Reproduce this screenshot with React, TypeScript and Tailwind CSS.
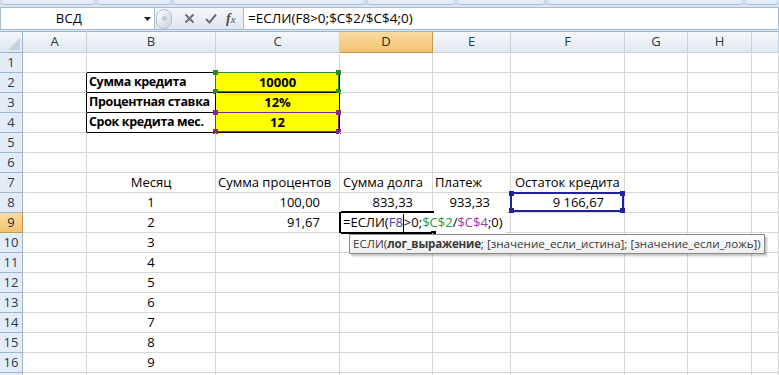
import React from "react";

const font = { fontFamily: "'Open Sans', 'Liberation Sans', sans-serif" };

const cols = ["A", "B", "C", "D", "E", "F", "G", "H", ""];
const gridCols = "grid grid-cols-[23px_64px_129px_124px_93px_78px_114px_63px_64px_1fr]";

type CellDef = { t?: React.ReactNode; cls?: string; extra?: React.ReactNode };

function Handles({ color }: { color: string }) {
  return (
    <>
      <span className={`absolute -left-[3px] -top-[3px] w-[5px] h-[5px] ${color}`} />
      <span className={`absolute -right-[3px] -top-[3px] w-[5px] h-[5px] ${color}`} />
      <span className={`absolute -left-[3px] -bottom-[3px] w-[5px] h-[5px] ${color}`} />
      <span className={`absolute -right-[3px] -bottom-[3px] w-[5px] h-[5px] ${color}`} />
    </>
  );
}

const months = ["1", "2", "3", "4", "5", "6", "7", "8", "9"];

function buildRow(r: number): CellDef[] {
  const cells: CellDef[] = Array.from({ length: 9 }, () => ({}));
  // table B2:C4
  if (r >= 2 && r <= 4) {
    cells[0].cls = "border-r-black";
    const labels = ["Сумма кредита", "Процентная ставка", "Срок кредита мес."];
    const vals = ["10000", "12%", "12"];
    cells[1] = {
      t: labels[r - 2],
      cls: "border-r-black border-b-black font-bold pl-[2px] text-[12.5px] tracking-[-0.35px]",
    };
    cells[2] = { t: vals[r - 2], cls: "border-r-black border-b-black font-bold justify-center bg-[#ffff00]" };
  }
  if (r === 1) {
    cells[1].cls = "border-b-black";
    cells[2].cls = "border-b-black";
  }
  if (r === 2) {
    cells[2].extra = (
      <span className="absolute -left-px -top-px right-0 bottom-0 border border-[#2a8a2a]">
        <Handles color="bg-[#2a8a2a]" />
      </span>
    );
  }
  if (r === 4) {
    cells[2].extra = (
      <span className="absolute -left-px -top-px right-0 bottom-0 border border-[#7e2a8e]">
        <Handles color="bg-[#7e2a8e]" />
      </span>
    );
  }
  if (r === 7) {
    cells[1] = { t: "Месяц", cls: "justify-center" };
    cells[2] = { t: "Сумма процентов", cls: "pl-[2px]" };
    cells[3] = { t: "Сумма долга", cls: "pl-[3px] whitespace-nowrap" };
    cells[4] = { t: "Платеж", cls: "pl-[2px]" };
    cells[5] = { t: "Остаток кредита", cls: "pl-[4px]" };
  }
  if (r >= 8 && r <= 16) {
    cells[1] = { t: months[r - 8], cls: "justify-center" };
  }
  if (r === 8) {
    cells[2] = { t: "100,00", cls: "justify-end pr-[19px]" };
    cells[3] = { t: "833,33", cls: "justify-end pr-[19px]" };
    cells[4] = { t: "933,33", cls: "justify-end pr-[20px]" };
    cells[5] = {
      t: "9 166,67",
      cls: "justify-end pr-[20px]",
      extra: (
        <span className="absolute -left-px -top-px right-0 bottom-0 border-2 border-[#22229a]">
          <Handles color="bg-[#22229a]" />
        </span>
      ),
    };
  }
  if (r === 9) {
    cells[2] = { t: "91,67", cls: "justify-end pr-[19px]" };
    cells[3] = {
      cls: "z-10",
      extra: (
        <span className="absolute -left-px -top-px h-[21px] flex items-center whitespace-nowrap bg-white pl-[2px] pr-[3px] border-l-2 border-black">
          <span className="absolute left-0 -top-px w-[93px] h-[2px] bg-black" />
          <span className="absolute left-0 -bottom-px w-[93px] h-[2px] bg-black" />
          <span className="absolute left-[90px] -bottom-[3px] w-[5px] h-[5px] bg-black" />
          <span>=ЕСЛИ(</span>
          <span className="text-[#3b3bb0]">F8</span>
          <span className="inline-block w-px h-[18px] bg-black" />
          <span>&gt;0;</span>
          <span className="text-[#2a9a3a]">$C$2</span>
          <span>/</span>
          <span className="text-[#9a3ab0]">$C$4</span>
          <span>;0)</span>
        </span>
      ),
    };
  }
  if (r === 10) {
    cells[3] = {
      cls: "z-20",
      extra: (
        <span className="absolute left-[9px] top-px h-[20px] w-[416px] flex items-center whitespace-nowrap border border-[#8c8c8c] bg-gradient-to-b from-white to-[#eeeeee] pl-[3px] text-[11.6px] text-[#3a3a3a] shadow-[2px_2px_2px_rgba(0,0,0,0.25)]">
          ЕСЛИ(<b className="tracking-[-0.2px]">лог_выражение</b>; [значение_если_истина]; [значение_если_ложь])
        </span>
      ),
    };
  }
  return cells;
}

function Corner() {
  return (
    <div className="h-[21px] border-r border-b border-[#9eb6ce] bg-gradient-to-b from-[#f3f6fb] to-[#dfe6ef] relative">
      <svg className="absolute right-[2px] bottom-[2px]" width="12" height="12" viewBox="0 0 12 12">
        <polygon points="12,0 12,12 0,12" fill="#c6d1de" />
      </svg>
    </div>
  );
}

export default function App() {
  const rows = Array.from({ length: 17 }, (_, i) => i + 1);
  return (
    <div className="w-[779px] h-[375px] overflow-hidden bg-white text-[13px] text-black" style={font}>
      {/* ribbon bottom */}
      <div className="h-[5px] bg-[#c9d9ee] flex gap-[4px] px-[2px]">
        <div className="w-[92px] bg-[#e3ecf8] rounded-b-[3px] border-b border-[#a9bfd6]" />
        <div className="w-[72px] bg-[#e3ecf8] rounded-b-[3px] border-b border-[#a9bfd6]" />
        <div className="w-[190px] bg-[#e3ecf8] rounded-b-[3px] border-b border-[#a9bfd6]" />
        <div className="w-[86px] bg-[#e3ecf8] rounded-b-[3px] border-b border-[#a9bfd6]" />
        <div className="w-[86px] bg-[#e3ecf8] rounded-b-[3px] border-b border-[#a9bfd6]" />
        <div className="w-[194px] bg-[#e3ecf8] rounded-b-[3px] border-b border-[#a9bfd6]" />
        <div className="flex-1 bg-[#e3ecf8] rounded-b-[3px] border-b border-[#a9bfd6]" />
      </div>
      {/* formula bar */}
      <div className="h-[27px] flex bg-[#dbe5f2] pt-[2px] pb-[1px] border-b border-[#9eb6ce]">
        <div className="w-[155px] bg-white border border-[#a9bbd2] flex items-center relative">
          <span className="w-[136px] text-center text-[13px] tracking-wide">ВСД</span>
          <svg className="absolute left-[143px] top-[9px]" width="7" height="4" viewBox="0 0 7 4">
            <polygon points="0,0 7,0 3.5,4" fill="#222" />
          </svg>
        </div>
        <div className="w-[88px] flex items-center bg-gradient-to-b from-[#f4f7fb] to-[#dfe6ef] border-y border-[#a9bbd2]">
          <div className="ml-[1px] w-[16px] h-[20px] rounded-full bg-gradient-to-br from-[#ffffff] to-[#c9d2dd] border border-[#b4c0cf] flex items-center justify-center">
            <span className="w-[5px] h-[5px] rounded-full bg-[#c4ccd6]" />
          </div>
          <svg className="ml-[12px]" width="11" height="11" viewBox="0 0 11 11">
            <path d="M1.5 1.5 L9.5 9.5 M9.5 1.5 L1.5 9.5" stroke="#6a6f78" strokeWidth="2" />
          </svg>
          <svg className="ml-[10px]" width="12" height="11" viewBox="0 0 12 11">
            <path d="M1 6 L4.5 9.5 L11 1.5" stroke="#6a6f78" strokeWidth="2" fill="none" />
          </svg>
          <span className="ml-[9px] italic text-[14px] text-[#4a4f58]" style={{ fontFamily: "'Liberation Serif', serif" }}>
            <b>f</b>
            <span className="text-[11px]">x</span>
          </span>
        </div>
        <div className="flex-1 bg-white border border-[#a9bbd2] flex items-center pl-[4px] text-[13.5px] whitespace-nowrap">
          =ЕСЛИ(F8&gt;0;$C$2/$C$4;0)
        </div>
      </div>
      {/* column headers */}
      <div className={gridCols}>
        <Corner />
        {cols.map((c, i) => (
          <div
            key={i}
            className={
              c === "D"
                ? "h-[21px] flex items-center justify-center border-r border-b border-[#c29a4f] bg-gradient-to-b from-[#f9dca3] to-[#f2c36c] text-[#2b2b2b]"
                : "h-[21px] flex items-center justify-center border-r border-b border-[#c5d2e0] bg-gradient-to-b from-[#f6f8fb] to-[#e3e9f1] text-[#2b3a4c]"
            }
          >
            {c}
          </div>
        ))}
      </div>
      {/* rows */}
      {rows.map((r) => {
        const cells = buildRow(r);
        return (
          <div key={r} className={gridCols}>
            <div
              className={
                r === 9
                  ? "h-5 flex items-center justify-center border-r border-b border-[#c29a4f] bg-gradient-to-b from-[#f9dca3] to-[#f2c36c] text-[#2b2b2b]"
                  : "h-5 flex items-center justify-center border-r border-b border-[#9eb6ce] bg-[#e4ecf7] text-[#2b3a4c]"
              }
            >
              {r <= 16 ? r : null}
            </div>
            {cells.map((c, i) => (
              <div
                key={i}
                className={`relative h-5 flex items-center whitespace-nowrap border-r border-b border-[#d8d8d8] ${c.cls ?? ""}`}
              >
                {c.t}
                {c.extra}
              </div>
            ))}
          </div>
        );
      })}
    </div>
  );
}
